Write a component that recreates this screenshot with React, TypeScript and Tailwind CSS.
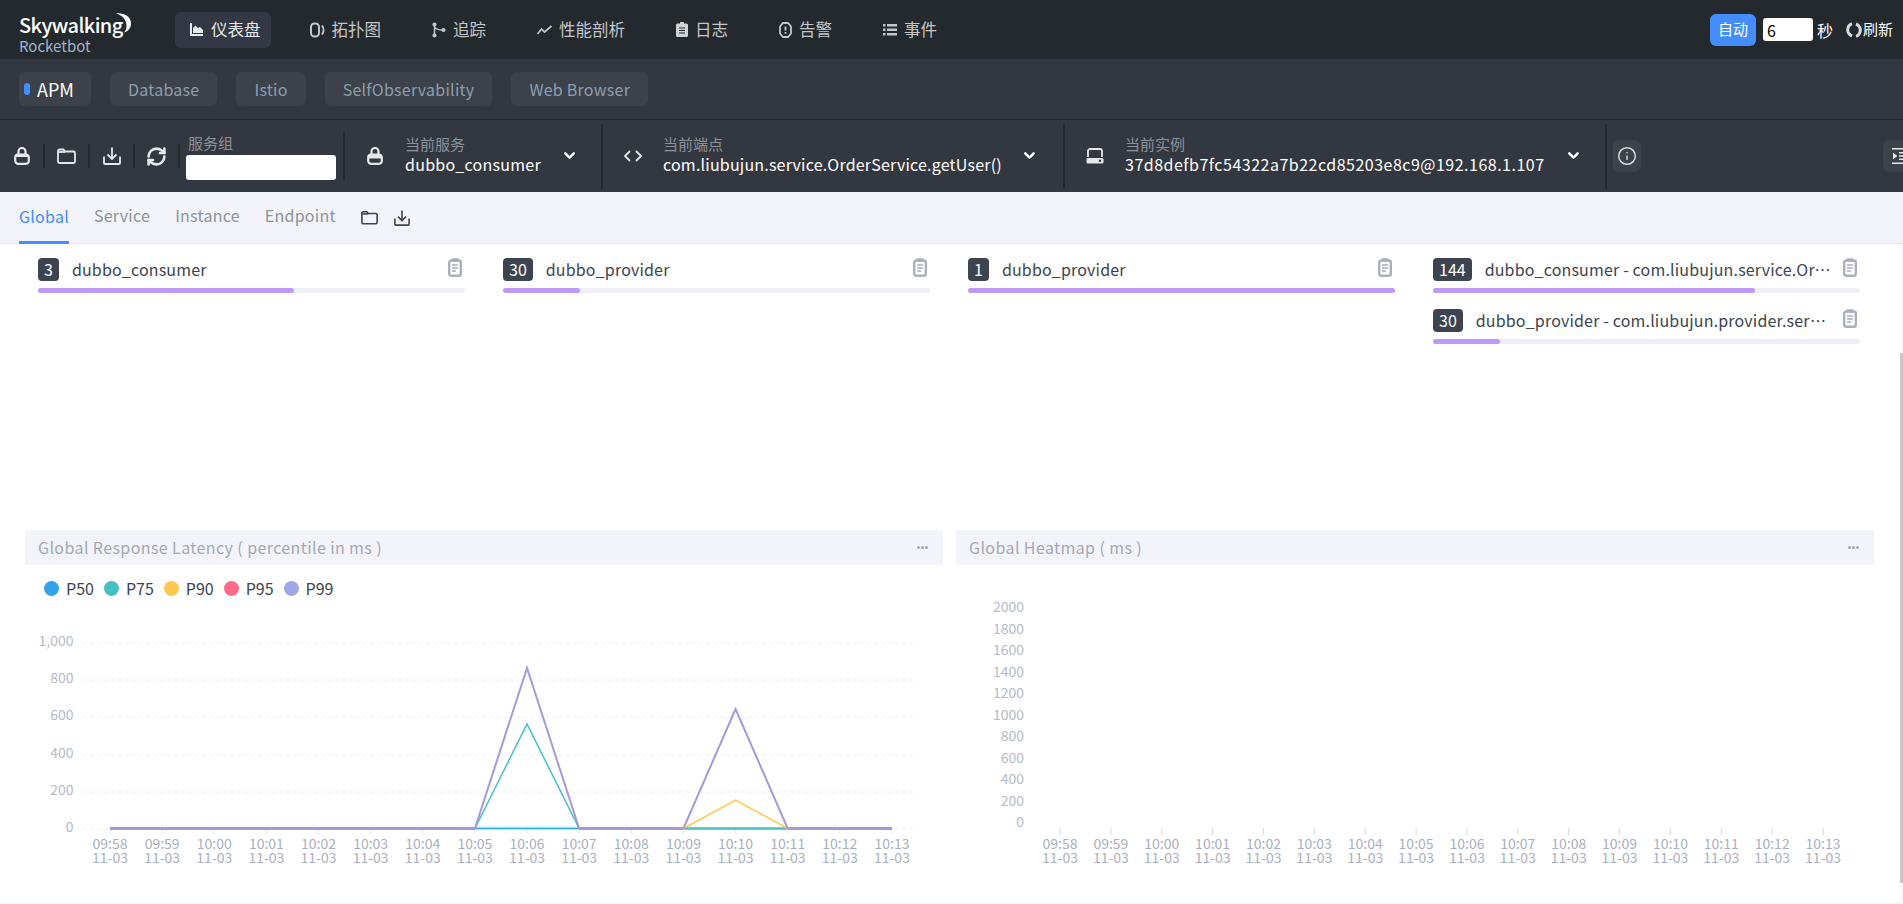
import { Info, RefreshCw, ChevronDown } from "lucide-react";

const font = { fontFamily: '"Noto Sans CJK SC", "Noto Sans", sans-serif' };

function Moon() {
  return (
    <svg width="19" height="20" viewBox="0 0 19 20" className="absolute left-[94px] top-0">
      <path d="M3 0.5C10 -0.5 18 3 18 10.5C18 15 15 18.5 11 19.5C13.5 16.5 14.5 12.5 12.5 8C11 4.5 7.5 1.5 3 0.5Z" fill="#fff" />
    </svg>
  );
}

function ChartIcon() {
  return (
    <svg width="13" height="13" viewBox="0 0 13 13" fill="#e8e9eb">
      <path d="M0 0h2v11h11v2H0z" />
      <path d="M3 10V5l2.5-2.5L8 5l2-1 3 3v3z" />
    </svg>
  );
}

function TopoIcon() {
  return (
    <svg width="15" height="16" viewBox="0 0 15 16" fill="none" stroke="#c4c6c9" strokeWidth="2">
      <rect x="1" y="1.5" width="8" height="13" rx="3.5" />
      <path d="M12 3.5c2 2.6 2 6.4 0 9" />
    </svg>
  );
}

function TraceIcon() {
  return (
    <svg width="14" height="16" viewBox="0 0 14 16" fill="#c4c6c9" stroke="#c4c6c9" strokeWidth="1.6">
      <circle cx="2.5" cy="2.5" r="1.3" />
      <circle cx="2.5" cy="13.5" r="1.3" />
      <circle cx="11.5" cy="8" r="1.3" />
      <path d="M2.5 3v10M2.5 5c1 2 3.5 3 9 3" fill="none" />
    </svg>
  );
}

function ProfileIcon() {
  return (
    <svg width="15" height="10" viewBox="0 0 15 10" fill="none" stroke="#c4c6c9" strokeWidth="1.7">
      <path d="M0.5 9l4-5 3 3 7-6" />
    </svg>
  );
}

function LogIcon() {
  return (
    <svg width="12" height="15" viewBox="0 0 12 15">
      <path d="M4 0h4v1.5h2.5a1.5 1.5 0 0 1 1.5 1.5v10.5a1.5 1.5 0 0 1-1.5 1.5h-9A1.5 1.5 0 0 1 0 13.500V3a1.500 1.500 0 0 1 1.500-1.500H4z" fill="#d0d2d4" />
      <path d="M3 6h6M3 8.500h6M3 11h6" stroke="#24292e" strokeWidth="1.200" />
    </svg>
  );
}

function AlertIcon() {
  return (
    <svg width="13" height="16" viewBox="0 0 13 16" fill="none" stroke="#c4c6c9" strokeWidth="1.800">
      <path d="M4 1h5l3 3.500v7L9 15H4l-3-3.500v-7z" />
      <path d="M6.500 4.500v4M6.500 10v1.800" />
    </svg>
  );
}

function ListIcon() {
  return (
    <svg width="14" height="12" viewBox="0 0 14 12" fill="#c4c6c9">
      <path d="M0 0h2.500v2.500H0zM4 0h10v2.500H4zM0 4.500h2.500V7H0zM4 4.500h10V7H4zM0 9h2.500v2.500H0zM4 9h10v2.500H4z" />
    </svg>
  );
}

function LockIcon({ filled = false }: { filled?: boolean }) {
  return (
    <svg width="16" height="18" viewBox="0 0 16 18" fill="none">
      <path d="M4.500 8V4.500a3.500 3.500 0 0 1 7 0V8" stroke="#e6e7e9" strokeWidth="2.200" />
      <rect x="1.200" y="7.500" width="13.600" height="9.300" rx="3" stroke="#e6e7e9" strokeWidth="2.200" />
      <path d={filled ? "M2 7.500h12v4H2z" : "M2 8h12v2H2z"} fill="#e6e7e9" />
    </svg>
  );
}

function FolderIcon({ color = "#e6e7e9" }: { color?: string }) {
  return (
    <svg width="100%" height="100%" viewBox="0 0 19 16" fill="none" stroke={color} strokeWidth="1.800">
      <path d="M1 3a1.500 1.500 0 0 1 1.500-1.500h4L8 3.500h8.500A1.500 1.500 0 0 1 18 5v8.500a1.500 1.500 0 0 1-1.500 1.500h-14A1.500 1.500 0 0 1 1 13.500z" />
      <path d="M1 4h7" />
    </svg>
  );
}

function DownloadIcon({ color = "#e6e7e9" }: { color?: string }) {
  return (
    <svg width="100%" height="100%" viewBox="0 0 18 18" fill="none" stroke={color} strokeWidth="1.800">
      <path d="M9 0.500v11M4.500 7.500L9 12l4.500-4.500" />
      <path d="M1 9.500V16a1 1 0 0 0 1 1h14a1 1 0 0 0 1-1V9.500" />
    </svg>
  );
}

function CodeIcon() {
  return (
    <svg width="18" height="12" viewBox="0 0 18 12" fill="none" stroke="#e6e7e9" strokeWidth="1.800">
      <path d="M6 1L1 6l5 5M12 1l5 5-5 5" />
    </svg>
  );
}

function InstanceIcon() {
  return (
    <svg width="18" height="16" viewBox="0 0 18 16" fill="none">
      <path d="M2 9V3a2 2 0 0 1 2-2h10a2 2 0 0 1 2 2v6" stroke="#e6e7e9" strokeWidth="1.800" />
      <rect x="0.500" y="10" width="17" height="5.500" rx="1.500" fill="#e6e7e9" />
      <circle cx="14" cy="12.750" r="1.200" fill="#333840" />
    </svg>
  );
}

function IndentIcon() {
  return (
    <svg width="20" height="16" viewBox="0 0 20 16" fill="#e6e7e9">
      <path d="M1 0h19v1.500H1zM8 4h12v1.500H8zM8 7.250h12v1.500H8zM8 10.500h12V12H8zM1 14.500h19V16H1zM2 4.800L6.500 8 2 11.200z" />
    </svg>
  );
}

function ClipIcon() {
  return (
    <svg width="14" height="19" viewBox="0 0 14 19" fill="none" className="shrink-0">
      <rect x="1.200" y="2.500" width="11.600" height="15.300" rx="2" stroke="#a9afbd" strokeWidth="2.400" />
      <rect x="3.500" y="0.300" width="7" height="3.500" rx="1" fill="#a9afbd" />
      <path d="M4 7h6M4 10h6M4 13h4" stroke="#a9afbd" strokeWidth="1.500" />
    </svg>
  );
}

const navItems = [
  { label: "仪表盘", icon: <ChartIcon />, active: true },
  { label: "拓扑图", icon: <TopoIcon /> },
  { label: "追踪", icon: <TraceIcon /> },
  { label: "性能剖析", icon: <ProfileIcon /> },
  { label: "日志", icon: <LogIcon /> },
  { label: "告警", icon: <AlertIcon /> },
  { label: "事件", icon: <ListIcon /> },
];

function TopBar() {
  return (
    <header className="flex h-[59px] shrink-0 items-center bg-[#24292e] text-[#c4c6c9]">
      <div className="relative ml-[19px] mt-[9px] h-[42px] w-[156px]">
        <div className="text-[20px] font-medium leading-[24px] tracking-[-0.6px] text-white">Skywalking</div>
        <Moon />
        <div className="text-[15px] leading-[17px] text-[#9fb2c8]">Rocketbot</div>
      </div>
      <nav className="flex items-center gap-[24px]">
        {navItems.map(n => (
          <div
            key={n.label}
            className={n.active
              ? "flex h-[36px] items-center gap-[8px] rounded-md bg-[#333844] pl-[15px] pr-[10px] text-[16.500px] text-[#e8e9eb]"
              : "flex h-[36px] items-center gap-[7px] pl-[15px] pr-[12px] text-[16.500px]"}
          >
            {n.icon}
            <span>{n.label}</span>
          </div>
        ))}
      </nav>
      <div className="ml-auto flex items-center text-white">
        <div className="flex h-[32px] w-[46px] items-center justify-center rounded-md bg-[#448dfe] text-[15px]">自动</div>
        <div className="ml-[7px] flex h-[23px] w-[50px] items-center rounded-[3px] bg-white pl-[4px] text-[16px] text-black">6</div>
        <span className="ml-[4px] text-[16px]">秒</span>
        <svg width="16" height="16" viewBox="0 0 16 16" fill="none" stroke="#d8d9db" strokeWidth="3" className="ml-[13px]">
          <path d="M6 1.800C2 2.800 0.800 8 2.500 11c.7 1.300 1.800 2.300 3.500 3" />
          <path d="M10 2c1.700.7 2.800 1.700 3.500 3 1.700 3 .5 8.200-3.500 9.200" />
        </svg>
        <span className="ml-[1px] mr-[10px] text-[15px]">刷新</span>
      </div>
    </header>
  );
}

const layers = ["APM", "Database", "Istio", "SelfObservability", "Web Browser"];

function LayerBar() {
  return (
    <div className="flex h-[61px] shrink-0 items-center gap-[19px] border-b border-[#24292e] bg-[#333840] pl-[19px]">
      {layers.map((l, i) => (
        <div
          key={l}
          className={i === 0
            ? "flex h-[34px] w-[72px] items-center gap-[7px] rounded-md bg-[#3d424a] pl-[5px] text-[18px] text-white"
            : "flex h-[34px] items-center rounded-md bg-[#3d424a] px-[18px] text-[16px] tracking-[0.25px] text-[#8f9dae]"}
        >
          {i === 0 && <span className="h-[12px] w-[6px] rounded-full bg-[#448dfe]" />}
          {l}
        </div>
      ))}
    </div>
  );
}

function Selector(props: { icon: React.ReactNode; label: string; value: string; className: string; iconClass: string; valueClass: string }) {
  return (
    <div className={props.className}>
      <div className={props.iconClass}>{props.icon}</div>
      <div className="flex-1 pb-[2px]">
        <div className="text-[15px] leading-[18px] text-[#8c9199]">{props.label}</div>
        <div className={props.valueClass}>{props.value}</div>
      </div>
      <ChevronDown size={17} strokeWidth={3.500} className="mb-[2px] text-white" />
    </div>
  );
}

function Cell({ children }: { children: React.ReactNode }) {
  return <div className="flex h-[24px] w-[45px] items-center justify-center border-r-2 border-[#24292e]">{children}</div>;
}

function ToolBar() {
  return (
    <div className="flex h-[72px] shrink-0 items-center overflow-hidden bg-[#333840]">
      <Cell><LockIcon /></Cell>
      <Cell><div className="h-[16px] w-[19px]"><FolderIcon /></div></Cell>
      <Cell><div className="h-[18px] w-[18px]"><DownloadIcon /></div></Cell>
      <Cell><RefreshCw size={21} strokeWidth={3} className="text-[#e6e7e9]" /></Cell>
      <div className="ml-[6px] mt-[1px] w-[150px]">
        <div className="pb-[3px] pl-[2px] text-[15px] leading-[19px] text-[#8c9199]">服务组</div>
        <div className="h-[25px] rounded-[3px] bg-white" />
      </div>
      <div className="ml-[7px] h-[48px] w-[2px] bg-[#24292e]" />
      <Selector
        icon={<LockIcon filled />}
        label="当前服务"
        value="dubbo_consumer"
        className="flex h-[65px] w-[258px] items-center border-r-2 border-[#24292e] pr-[23px]"
        iconClass="ml-[22px] mr-[22px]"
        valueClass="whitespace-nowrap text-[16px] leading-[22px] tracking-[0.25px] text-white"
      />
      <Selector
        icon={<CodeIcon />}
        label="当前端点"
        value="com.liubujun.service.OrderService.getUser()"
        className="flex h-[65px] w-[462px] items-center border-r-2 border-[#24292e] pr-[25px]"
        iconClass="ml-[21px] mr-[21px]"
        valueClass="whitespace-nowrap text-[16px] leading-[22px] tracking-[0.2px] text-white"
      />
      <Selector
        icon={<InstanceIcon />}
        label="当前实例"
        value="37d8defb7fc54322a7b22cd85203e8c9@192.168.1.107"
        className="flex h-[65px] w-[542px] items-center border-r-2 border-[#24292e] pr-[23px]"
        iconClass="ml-[21px] mr-[21px]"
        valueClass="whitespace-nowrap text-[16px] leading-[22px] tracking-[0.5px] text-white"
      />
      <div className="ml-[6px] flex h-[32px] w-[28px] items-center justify-center rounded-md bg-[#3d424a]">
        <Info size={20} strokeWidth={1.800} className="text-[#d8d9db]" />
      </div>
      <div className="ml-auto -mr-[8px] flex h-[32px] w-[28px] shrink-0 items-center justify-end rounded-md bg-[#3d424a]">
        <IndentIcon />
      </div>
    </div>
  );
}

function Tabs() {
  return (
    <div className="flex h-[52px] shrink-0 items-stretch gap-[25px] border-b border-[#e5e7ee] bg-[#f3f4f9] pl-[19px] text-[16px] tracking-[0.25px] text-[#8d929c]">
      <div className="-mb-px flex items-center border-b-[3px] border-[#448dfe] pb-[2px] text-[#448dfe]">Global</div>
      <div className="flex items-center pb-[5px]">Service</div>
      <div className="flex items-center pb-[5px]">Instance</div>
      <div className="flex items-center pb-[5px]">Endpoint</div>
      <div className="flex items-center gap-[16px]">
        <div className="h-[15px] w-[17px]"><FolderIcon color="#3d444f" /></div>
        <div className="h-[16px] w-[16px]"><DownloadIcon color="#3d444f" /></div>
      </div>
    </div>
  );
}

function Bar({ count, label, pct }: { count: string; label: string; pct: string }) {
  return (
    <div className="mb-[16px]">
      <div className="flex h-[23px] items-center justify-between text-[16px] text-[#3d444f]">
        <div className="flex min-w-0 items-center gap-[13px]">
          <span className="flex h-[23px] shrink-0 items-center rounded-[4px] bg-[#3d444f] px-[6px] pb-[1px] text-white">{count}</span>
          <span className="truncate pb-[2px] tracking-[0.17px]">{label}</span>
        </div>
        <div className="mb-[5px] ml-[12px] mr-[3px]"><ClipIcon /></div>
      </div>
      <div className="mt-[7px] h-[5px] rounded-full bg-[#eeeef6]">
        <div className="h-full rounded-full bg-[#bf99f8]" style={{ width: pct }} />
      </div>
    </div>
  );
}

const legend = [
  { name: "P50", color: "h-[15px] w-[15px] rounded-full bg-[#30a4eb]" },
  { name: "P75", color: "h-[15px] w-[15px] rounded-full bg-[#45bfc0]" },
  { name: "P90", color: "h-[15px] w-[15px] rounded-full bg-[#ffc750]" },
  { name: "P95", color: "h-[15px] w-[15px] rounded-full bg-[#ff6a84]" },
  { name: "P99", color: "h-[15px] w-[15px] rounded-full bg-[#a0a7e6]" },
];

const times = ["09:58", "09:59", "10:00", "10:01", "10:02", "10:03", "10:04", "10:05", "10:06", "10:07", "10:08", "10:09", "10:10", "10:11", "10:12", "10:13"];

function XLabels({ x0, step }: { x0: number; step: number }) {
  return (
    <>
      {times.map((t, i) => (
        <g key={t} fill="#a9afbd" fontSize="14" textAnchor="middle">
          <text x={x0 + i * step} y={849}>{t}</text>
          <text x={x0 + i * step} y={863}>11-03</text>
        </g>
      ))}
    </>
  );
}

function LatencyChart() {
  const x = (i: number) => 110 + i * 52.13;
  const base = 828.500;
  const ys = [["1,000", 643], ["800", 680], ["600", 717], ["400", 755], ["200", 792], ["0", 829]] as const;
  const peak = (i: number, y: number) => `${x(i - 1)},${base} ${x(i)},${y} ${x(i + 1)},${base}`;
  return (
    <svg width="918" height="288" viewBox="25 615 918 288" className="block">
      {ys.map(([label, y]) => (
        <g key={label}>
          <line x1="83" x2="917" y1={y} y2={y} stroke="#eceef3" strokeDasharray="4 3" />
          <text x="73.500" y={y + 3} textAnchor="end" fontSize="14" fill="#b4b9c5">{label}</text>
        </g>
      ))}
      {times.map((t, i) => <line key={t} x1={x(i)} x2={x(i)} y1="829" y2="834" stroke="#e4e6ec" />)}
      <line x1={x(7)} x2={x(9)} y1="827" y2="827" stroke="#cdeef0" strokeWidth="1.500" />
      <line x1={x(7)} x2={x(9)} y1={base} y2={base} stroke="#30a4eb" strokeWidth="1.500" />
      <line x1={x(11)} x2={x(13)} y1={base} y2={base} stroke="#45bfc0" strokeWidth="2.500" />
      <polyline points={peak(8, 724)} fill="none" stroke="#45bfc0" strokeWidth="1.500" />
      <polyline points={peak(12, 800)} fill="none" stroke="#ffc750" strokeWidth="1.500" />
      <polyline points={peak(8, 668)} fill="none" stroke="#a599d8" strokeWidth="2" />
      <polyline points={peak(12, 709)} fill="none" stroke="#a599d8" strokeWidth="2" />
      <line x1={x(0)} x2={x(7)} y1={base} y2={base} stroke="#a599d8" strokeWidth="3" />
      <line x1={x(9)} x2={x(11)} y1={base} y2={base} stroke="#a599d8" strokeWidth="3" />
      <line x1={x(13)} x2={x(15)} y1={base} y2={base} stroke="#a599d8" strokeWidth="3" />
      <XLabels x0={110} step={52.130} />
    </svg>
  );
}

function HeatmapChart() {
  const x = (i: number) => 1060 + i * 50.870;
  const ys = ["2000", "1800", "1600", "1400", "1200", "1000", "800", "600", "400", "200", "0"];
  return (
    <svg width="918" height="338" viewBox="956 565 918 338" className="block">
      {ys.map((label, i) => (
        <text key={label} x="1024" y={612 + i * 21.500} textAnchor="end" fontSize="14" fill="#b4b9c5">{label}</text>
      ))}
      {times.map((t, i) => <line key={t} x1={x(i)} x2={x(i)} y1="828" y2="835" stroke="#d5d8e0" />)}
      <XLabels x0={1060} step={50.870} />
    </svg>
  );
}

function PanelHeader({ title }: { title: string }) {
  return (
    <div className="flex h-[35px] items-center justify-between rounded-[2px] bg-[#f3f4f9] pb-[1px] pl-[13px] pr-[15px] text-[16px] tracking-[0.4px] text-[#a3a9b6]">
      <span>{title}</span>
      <span className="flex gap-[1px]">
        <i className="h-[3px] w-[3px] rounded-full bg-[#a3a9b6]" />
        <i className="h-[3px] w-[3px] rounded-full bg-[#a3a9b6]" />
        <i className="h-[3px] w-[3px] rounded-full bg-[#a3a9b6]" />
      </span>
    </div>
  );
}

export default function App() {
  return (
    <div className="flex h-screen w-full flex-col overflow-hidden bg-white" style={font}>
      <TopBar />
      <LayerBar />
      <ToolBar />
      <Tabs />
      <div className="flex min-h-0 flex-1">
        <main className="flex min-w-0 flex-1 flex-col">
          <section className="grid h-[286px] shrink-0 grid-cols-[repeat(4,427px)] gap-x-[38px] pl-[38px] pt-[14px]">
            <div><Bar count="3" label="dubbo_consumer" pct="60%" /></div>
            <div><Bar count="30" label="dubbo_provider" pct="18%" /></div>
            <div><Bar count="1" label="dubbo_provider" pct="100%" /></div>
            <div>
              <Bar count="144" label="dubbo_consumer - com.liubujun.service.OrderService.getUser()" pct="75.400%" />
              <Bar count="30" label="dubbo_provider - com.liubujun.provider.service.impl.UserServiceImpl.getUser()" pct="15.600%" />
            </div>
          </section>
          <section className="grid h-[374px] shrink-0 grid-cols-[918px_918px] gap-x-[13px] border-b border-[#f3f4f9] pl-[25px]">
            <div>
              <PanelHeader title="Global Response Latency ( percentile in ms )" />
              <div className="flex h-[50px] items-start gap-[10px] pl-[19px] pt-[15px] text-[16px] leading-[17px] text-[#3d444f]">
                {legend.map(l => (
                  <div key={l.name} className="flex items-center gap-[7px]">
                    <span className={l.color} />
                    {l.name}
                  </div>
                ))}
              </div>
              <LatencyChart />
            </div>
            <div>
              <PanelHeader title="Global Heatmap ( ms )" />
              <HeatmapChart />
            </div>
          </section>
        </main>
        <aside className="w-[4px] shrink-0 bg-[#fafafa] pt-[109px]">
          <div className="ml-[1px] h-[530px] w-[3px] bg-[#c8c8c8]" />
        </aside>
      </div>
    </div>
  );
}
